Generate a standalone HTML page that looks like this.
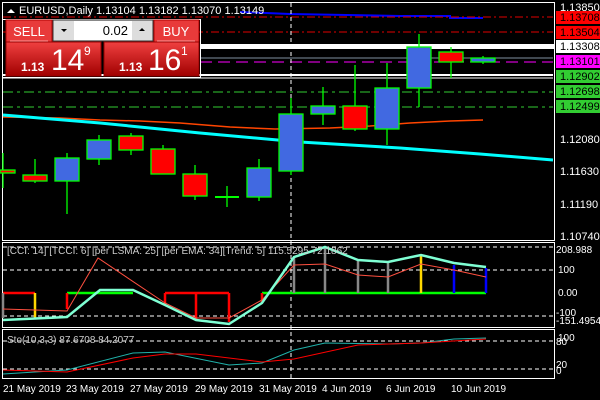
<!DOCTYPE html>
<html><head><meta charset="utf-8"><style>
body{margin:0;background:#000;width:600px;height:400px;overflow:hidden;font-family:"Liberation Sans",sans-serif}
svg{position:absolute;left:0;top:0}
.p{position:absolute}
</style></head><body>
<svg width="600" height="400" font-family="Liberation Sans, sans-serif">
<!-- frames -->
<rect x="2.5" y="2.5" width="552" height="238" fill="none" stroke="#fff"/>
<rect x="2.5" y="242.5" width="552" height="85" fill="none" stroke="#fff"/>
<rect x="2.5" y="329.5" width="552" height="49" fill="none" stroke="#fff"/>
<!-- blue top line -->
<polyline points="240,12 290,14 400,16 450,16 450,18 483,18" fill="none" stroke="#0000ff" stroke-width="2"/>
<!-- level lines -->
<line x1="3" y1="17" x2="553" y2="17" stroke="#e00000" stroke-dasharray="8,3,2,3"/>
<line x1="3" y1="32" x2="553" y2="32" stroke="#e00000" stroke-dasharray="8,3,2,3"/>
<rect x="200" y="44" width="354" height="5" fill="#fff"/>
<line x1="200" y1="58" x2="553" y2="58" stroke="#8090a0"/>
<line x1="200" y1="62" x2="553" y2="62" stroke="#ff00ff" stroke-dasharray="12,6"/>
<line x1="3" y1="75" x2="553" y2="75" stroke="#fff" stroke-width="2"/>
<line x1="3" y1="78" x2="553" y2="78" stroke="#fff"/>
<line x1="3" y1="92" x2="553" y2="92" stroke="#32cd32" stroke-dasharray="10,4,3,4"/>
<line x1="3" y1="107" x2="553" y2="107" stroke="#32cd32" stroke-dasharray="10,4,3,4"/>
<!-- MAs -->
<polyline points="3,117 60,118 100,120 140,121 180,123 230,127 275,129 330,128 370,126 410,123 450,121 483,120" fill="none" stroke="#ff4500" stroke-width="1.5"/>
<polyline points="3,115 100,123 200,133 300,142 400,148 480,154 553,160" fill="none" stroke="#00ffff" stroke-width="3"/>
<!-- vertical dashed -->
<line x1="291" y1="3" x2="291" y2="380" stroke="#fff" stroke-dasharray="4,3"/>
<!-- candles -->
<g stroke="#00ff00" stroke-width="1.3">
<line x1="3" y1="153" x2="3" y2="188"/><rect x="0" y="170" width="15" height="3" fill="#f00"/>
<line x1="35" y1="159" x2="35" y2="183"/><rect x="23" y="175" width="24" height="6" fill="#f00"/>
<line x1="67" y1="153" x2="67" y2="214"/><rect x="55" y="158" width="24" height="23" fill="#4169e1"/>
<line x1="99" y1="135" x2="99" y2="165"/><rect x="87" y="140" width="24" height="19" fill="#4169e1"/>
<line x1="131" y1="133" x2="131" y2="155"/><rect x="119" y="136" width="24" height="14" fill="#f00"/>
<line x1="163" y1="145" x2="163" y2="174"/><rect x="151" y="149" width="24" height="25" fill="#f00"/>
<line x1="195" y1="165" x2="195" y2="200"/><rect x="183" y="174" width="24" height="22" fill="#f00"/>
<line x1="227" y1="186" x2="227" y2="207"/><line x1="215" y1="197" x2="239" y2="197" stroke-width="2"/>
<line x1="259" y1="159" x2="259" y2="201"/><rect x="247" y="168" width="24" height="29" fill="#4169e1"/>
<line x1="291" y1="98" x2="291" y2="175"/><rect x="279" y="114" width="24" height="57" fill="#4169e1"/>
<line x1="323" y1="87" x2="323" y2="125"/><rect x="311" y="106" width="24" height="8" fill="#4169e1"/>
<line x1="355" y1="65" x2="355" y2="131"/><rect x="343" y="106" width="24" height="23" fill="#f00"/>
<line x1="387" y1="63" x2="387" y2="145"/><rect x="375" y="88" width="24" height="41" fill="#4169e1"/>
<line x1="419" y1="34" x2="419" y2="107"/><rect x="407" y="47" width="24" height="41" fill="#4169e1"/>
<line x1="451" y1="47" x2="451" y2="78"/><rect x="439" y="52" width="24" height="10" fill="#f00"/>
<line x1="483" y1="56" x2="483" y2="64"/><rect x="471" y="58" width="24" height="4" fill="#4169e1"/>
</g>
<!-- price axis labels -->
<g font-size="11" fill="#fff">
<text x="560" y="11">1.13850</text>
<rect x="556" y="11" width="44" height="13" fill="#f00"/><text x="560" y="21" fill="#000">1.13708</text>
<rect x="556" y="26" width="44" height="13" fill="#f00"/><text x="560" y="36" fill="#000">1.13504</text>
<rect x="556" y="40" width="44" height="13" fill="#fff"/><text x="560" y="50" fill="#000">1.13308</text>
<rect x="556" y="55" width="44" height="13" fill="#ff00ff"/><text x="560" y="65" fill="#000">1.13101</text>
<rect x="556" y="70" width="44" height="13" fill="#32cd32"/><text x="560" y="80" fill="#000">1.12902</text>
<rect x="556" y="85" width="44" height="13" fill="#32cd32"/><text x="560" y="95" fill="#000">1.12698</text>
<rect x="556" y="100" width="44" height="13" fill="#32cd32"/><text x="560" y="110" fill="#000">1.12499</text>
<text x="560" y="143">1.12080</text>
<text x="560" y="175">1.11630</text>
<text x="560" y="208">1.11190</text>
<text x="560" y="240">1.10740</text>
</g>
<!-- CCI panel -->
<g stroke="#fff" stroke-dasharray="4,3"><line x1="3" y1="247" x2="553" y2="247"/><line x1="3" y1="270" x2="553" y2="270"/><line x1="3" y1="316" x2="553" y2="316"/>
<line x1="3" y1="341" x2="553" y2="341"/><line x1="3" y1="369" x2="553" y2="369"/></g>
<g stroke-width="2.5">
<line x1="3" y1="293" x2="35" y2="293" stroke="#f00"/>
<line x1="67" y1="293" x2="133" y2="293" stroke="#0f0"/>
<line x1="165" y1="293" x2="229" y2="293" stroke="#f00"/>
<line x1="262" y1="293" x2="486" y2="293" stroke="#0f0"/>
<line x1="3" y1="293" x2="3" y2="318" stroke="#888"/>
<line x1="35" y1="293" x2="35" y2="318" stroke="#ffd700"/>
<line x1="67" y1="293" x2="67" y2="309" stroke="#f00"/>
<line x1="165" y1="293" x2="165" y2="304" stroke="#f00"/>
<line x1="196" y1="293" x2="196" y2="320" stroke="#f00"/>
<line x1="229" y1="293" x2="229" y2="322" stroke="#f00"/>
<line x1="262" y1="293" x2="262" y2="303" stroke="#f00"/>
<line x1="294" y1="293" x2="294" y2="258" stroke="#888"/>
<line x1="325" y1="293" x2="325" y2="248" stroke="#888"/>
<line x1="358" y1="293" x2="358" y2="260" stroke="#888"/>
<line x1="388" y1="293" x2="388" y2="262" stroke="#888"/>
<line x1="421" y1="293" x2="421" y2="256" stroke="#ffd700"/>
<line x1="454" y1="293" x2="454" y2="265" stroke="#00f"/>
<line x1="486" y1="293" x2="486" y2="268" stroke="#00f"/>
</g>
<polyline points="3,309 67,311 98,258 165,303 196,318 229,318 262,300 294,265 325,264 358,275 388,277 421,264 454,270 486,277" fill="none" stroke="#ff5040" stroke-width="1"/>
<polyline points="3,320 67,317 100,290 133,290 165,305 196,320 229,324 262,303 294,257 325,247 358,260 388,262 421,255 454,263 486,267" fill="none" stroke="#7fffd4" stroke-width="2.5"/>
<text x="7" y="254" font-size="10" fill="#ccc">[CCI: 14] [TCCI: 6] [per LSMA: 25] [per EMA: 34][Trend: 5]  115.5295 72.1862</text>
<g font-size="10" fill="#fff">
<text x="556" y="253">208.988</text><text x="558" y="273">100</text><text x="558" y="296">0.00</text>
<text x="556" y="316">-100</text><text x="556" y="324">-151.4954</text>
<text x="558" y="341">100</text><text x="556" y="345">80</text>
<text x="556" y="368">20</text><text x="556" y="374">0</text>
</g>
<!-- Sto -->
<polyline points="3,374 67,370 133,353 165,352 229,365 262,363 294,350 325,343 388,344 421,343 454,339 486,338" fill="none" stroke="#20b2aa" stroke-width="1"/>
<polyline points="3,370 67,372 133,358 165,354 196,354 262,362 294,359 358,345 421,343 486,339" fill="none" stroke="#f00" stroke-width="1"/>
<text x="7" y="343" font-size="10" fill="#ccc">Sto(10,3,3) 87.6708 84.2077</text>
<!-- dates -->
<g font-size="10" fill="#fff">
<text x="3" y="392">21 May 2019</text><text x="66" y="392">23 May 2019</text><text x="130" y="392">27 May 2019</text>
<text x="195" y="392">29 May 2019</text><text x="259" y="392">31 May 2019</text><text x="322" y="392">4 Jun 2019</text>
<text x="386" y="392">6 Jun 2019</text><text x="451" y="392">10 Jun 2019</text>
</g>
<!-- title -->
<polygon points="7,13 11,9 15,13" fill="#fff"/>
<text x="19" y="14" font-size="11" fill="#fff">EURUSD,Daily  1.13104 1.13182 1.13070 1.13149</text>
<!-- trade panel -->
<defs><linearGradient id="g" x1="0" y1="0" x2="0" y2="1"><stop offset="0" stop-color="#f04040"/><stop offset="1" stop-color="#a00000"/></linearGradient></defs>
<rect x="2.5" y="19.5" width="198" height="58" fill="none" stroke="#fff"/>
<rect x="6" y="20" width="46" height="22" fill="#e83a3a" stroke="#b00000"/>
<line x1="10" y1="41" x2="48" y2="41" stroke="#f99"/>
<text x="29" y="36" font-size="13" fill="#fff" text-anchor="middle">SELL</text>
<rect x="154" y="20" width="45" height="22" fill="#e83a3a" stroke="#b00000"/>
<line x1="157" y1="41" x2="195" y2="41" stroke="#f99"/>
<text x="176" y="36" font-size="13" fill="#fff" text-anchor="middle">BUY</text>
<rect x="53" y="20" width="100" height="21" fill="#ddd" stroke="#333"/>
<rect x="74" y="21" width="58" height="19" fill="#fff"/>
<polygon points="61,29 67,29 64,32" fill="#000"/><polygon points="139,31 145,31 142,28" fill="#000"/>
<text x="128" y="35" font-size="13" fill="#000" text-anchor="end">0.02</text>
<rect x="6" y="42" width="95" height="34" fill="url(#g)" stroke="#900"/>
<rect x="104" y="42" width="95" height="34" fill="url(#g)" stroke="#900"/>
<g fill="#fff">
<text x="21" y="71" font-size="12" font-weight="bold">1.13</text>
<text x="51" y="70" font-size="30">14</text><text x="84" y="55" font-size="12">9</text>
<text x="119" y="71" font-size="12" font-weight="bold">1.13</text>
<text x="148" y="70" font-size="30">16</text><text x="181" y="55" font-size="12">1</text>
</g>
</svg>
</body></html>
